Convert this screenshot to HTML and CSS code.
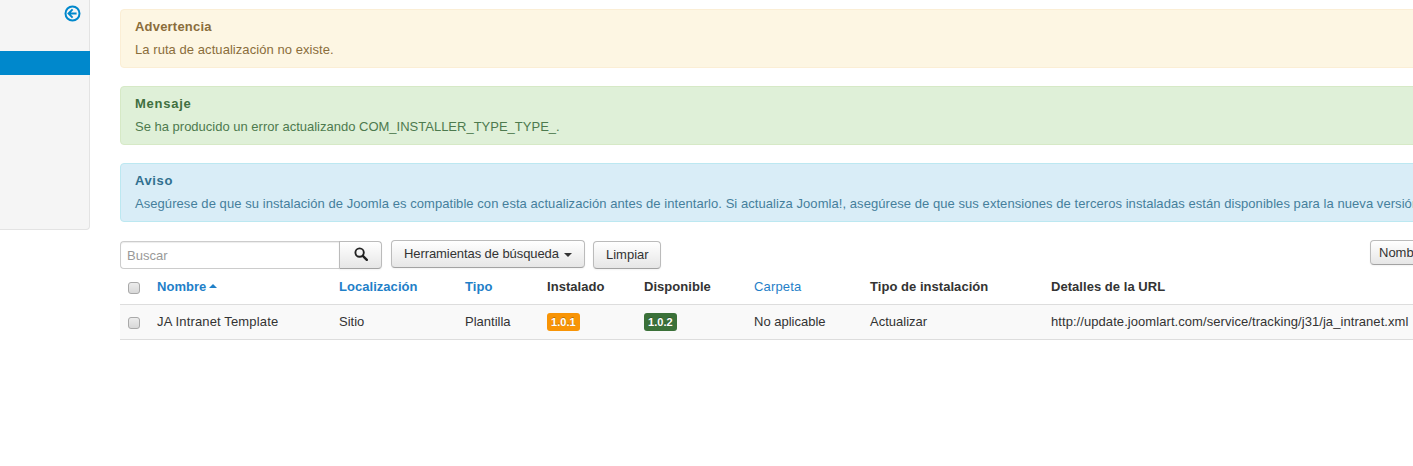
FILE: index.html
```html
<!DOCTYPE html>
<html lang="es">
<head>
<meta charset="utf-8">
<title>Actualizar</title>
<link rel="stylesheet" href="styles.css">
</head>
<body>
<div class="page">
  <aside class="sidebar">
    <div class="toggle">
      <svg class="toggle-icon" width="17" height="17" viewBox="0 0 17 17" aria-hidden="true">
        <circle cx="8.5" cy="8.5" r="7" fill="none" stroke="#0088cc" stroke-width="2"/>
        <path d="M8.6 4.4L4.5 8.5l4.1 4.1M4.8 8.5h7.8" fill="none" stroke="#0088cc" stroke-width="1.9"/>
      </svg>
    </div>
    <div class="active-item"></div>
  </aside>
  <main class="content">
    <div class="alert warning">
      <h4>Advertencia</h4>
      <p>La ruta de actualización no existe.</p>
    </div>
    <div class="alert success">
      <h4>Mensaje</h4>
      <p>Se ha producido un error actualizando COM_INSTALLER_TYPE_TYPE_.</p>
    </div>
    <div class="alert info">
      <h4>Aviso</h4>
      <p>Asegúrese de que su instalación de Joomla es compatible con esta actualización antes de intentarlo. Si actualiza Joomla!, asegúrese de que sus extensiones de terceros instaladas están disponibles para la nueva versión.</p>
    </div>
    <div class="toolbar">
      <div class="search">
        <input class="search-input" type="text" placeholder="Buscar">
        <button class="btn search-btn" type="button" aria-label="Buscar">
          <svg width="14" height="14" viewBox="0 0 14 14" aria-hidden="true">
            <circle cx="5.6" cy="5.6" r="4.2" fill="none" stroke="#222" stroke-width="1.9"/>
            <path d="M8.8 8.8l4 4" stroke="#222" stroke-width="2.4" stroke-linecap="round"/>
          </svg>
        </button>
      </div>
      <button class="btn tools-btn" type="button">Herramientas de búsqueda <span class="caret"></span></button>
      <button class="btn clear-btn" type="button">Limpiar</button>
      <button class="btn sort-btn" type="button">Nombre ascendente</button>
    </div>
    <table class="list">
      <thead>
        <tr>
          <th class="c-check"><span class="check"></span></th>
          <th class="c-name"><a>Nombre</a><span class="caret-up"></span></th>
          <th class="c-loc"><a>Localización</a></th>
          <th class="c-type"><a>Tipo</a></th>
          <th class="c-inst">Instalado</th>
          <th class="c-avail">Disponible</th>
          <th class="c-folder"><a class="plain">Carpeta</a></th>
          <th class="c-kind">Tipo de instalación</th>
          <th class="c-url">Detalles de la URL</th>
        </tr>
      </thead>
      <tbody>
        <tr>
          <td><span class="check"></span></td>
          <td class="wide-name">JA Intranet Template</td>
          <td>Sitio</td>
          <td>Plantilla</td>
          <td><span class="badge orange">1.0.1</span></td>
          <td><span class="badge green">1.0.2</span></td>
          <td>No aplicable</td>
          <td>Actualizar</td>
          <td class="wide-url">http://update.joomlart.com/service/tracking/j31/ja_intranet.xml</td>
        </tr>
      </tbody>
    </table>
  </main>
</div>
</body>
</html>
```

FILE: styles.css
```css
* { box-sizing: border-box; }
html, body { margin: 0; padding: 0; height: 466px; overflow: hidden; background: #fff; }
body { font-family: "Liberation Sans", Arial, sans-serif; font-size: 13px; line-height: 18px; color: #333; }
.page { display: flex; align-items: flex-start; width: 1700px; }

.sidebar { flex: 0 0 90px; height: 230px; background: #f5f5f5; border: 1px solid #e3e3e3; border-width: 0 1px 1px 0; border-radius: 0 0 4px 0; }
.toggle { display: flex; justify-content: flex-end; height: 51px; padding: 5px 8px 0 0; }
.toggle-icon { display: block; }
.active-item { height: 24px; margin-right: -1px; background: #0088cc; }

.content { flex: 1; min-width: 0; padding: 9px 0 0 30px; }
.alert { height: 59px; margin-bottom: 18px; padding: 8px 14px; border: 1px solid; border-radius: 4px; white-space: nowrap; }
.alert h4 { margin: 0; font-size: 13px; line-height: 18px; font-weight: bold; }
.alert p { margin: 5px 0 0; font-size: 13px; line-height: 18px; }
.warning { background: #fdf6e3; border-color: #fbeed5; color: #8a6d3b; }
.warning h4 { letter-spacing: 0.2px; }
.warning p { letter-spacing: 0.06px; }
.success { background: #dff0d8; border-color: #d6e9c6; color: #3f6f40; }
.success h4 { letter-spacing: 0.75px; }
.success p { color: #4d7a4e; }
.info { background: #d9edf7; border-color: #bce8f1; color: #31708f; }
.info h4 { letter-spacing: 0.6px; }
.info p { color: #457f9c; letter-spacing: 0.06px; }

.toolbar { display: flex; align-items: flex-start; margin-top: 1px; height: 29px; }
.search { display: flex; width: 262px; height: 28px; margin-top: 1px; }
.search-input { flex: 1; min-width: 0; height: 28px; padding: 4px 6px; border: 1px solid #cccccc; border-right: 0; border-radius: 4px 0 0 4px; font: 13px/18px "Liberation Sans", Arial, sans-serif; color: #555; outline: none; box-shadow: inset 0 1px 1px rgba(0,0,0,0.075); }
.search-input::placeholder { color: #999; opacity: 1; }
.btn { height: 28px; padding: 4px 12px; border: 1px solid #bbbbbb; border-bottom-color: #a2a2a2; border-radius: 4px; background: linear-gradient(#ffffff, #e6e6e6); font: 13px/18px "Liberation Sans", Arial, sans-serif; color: #333; box-shadow: inset 0 1px 0 rgba(255,255,255,0.2), 0 1px 2px rgba(0,0,0,0.05); white-space: nowrap; }
.search-btn { flex: 0 0 43px; display: flex; align-items: center; justify-content: center; padding: 0 0 3px; border-radius: 0 4px 4px 0; }
.tools-btn { margin-left: 9px; width: 194px; letter-spacing: -0.08px; }
.clear-btn { margin-left: 8px; margin-top: 1px; width: 68px; }
.sort-btn { margin-left: 709px; width: 200px; height: 25px; padding: 2px 8px; text-align: left; }
.caret { display: inline-block; width: 0; height: 0; margin-left: 2px; vertical-align: middle; border-top: 4px solid #333; border-left: 4px solid transparent; border-right: 4px solid transparent; }

.list { border-collapse: collapse; table-layout: fixed; width: 1293px; }
.list th { height: 35px; padding: 2px 0 0; text-align: left; font-weight: bold; border-bottom: 1px solid #dddddd; letter-spacing: 0.04px; }
.list td { height: 35px; padding: 0; background: #f9f9f9; border-bottom: 1px solid #dddddd; }
.list a { color: #1f80c8; }
.list a.plain { font-weight: normal; letter-spacing: 0.15px; }
.list .wide-name { letter-spacing: 0.15px; }
.list .wide-url { letter-spacing: 0.065px; }
.c-check { width: 37px; }
.c-name { width: 182px; }
.c-loc { width: 126px; }
.c-type { width: 82px; }
.c-inst { width: 97px; }
.c-avail { width: 110px; }
.c-folder { width: 116px; }
.c-kind { width: 181px; }
.check { display: block; width: 12px; height: 12px; margin: 2px 0 0 8px; border: 1px solid #a9a9a9; border-radius: 3px; background: linear-gradient(#ececec, #d8d8d8); }
.caret-up { display: inline-block; width: 0; height: 0; margin-left: 3px; vertical-align: 3px; border-bottom: 4px solid #1f80c8; border-left: 4px solid transparent; border-right: 4px solid transparent; }
.badge { display: inline-block; height: 18px; padding: 0 4px; border-radius: 3px; font-size: 11px; line-height: 18px; font-weight: bold; letter-spacing: 0.05px; color: #fff; text-shadow: 0 -1px 0 rgba(0,0,0,0.25); vertical-align: middle; }
.orange { background: #f89406; }
.green { background: #3b7139; }
```
